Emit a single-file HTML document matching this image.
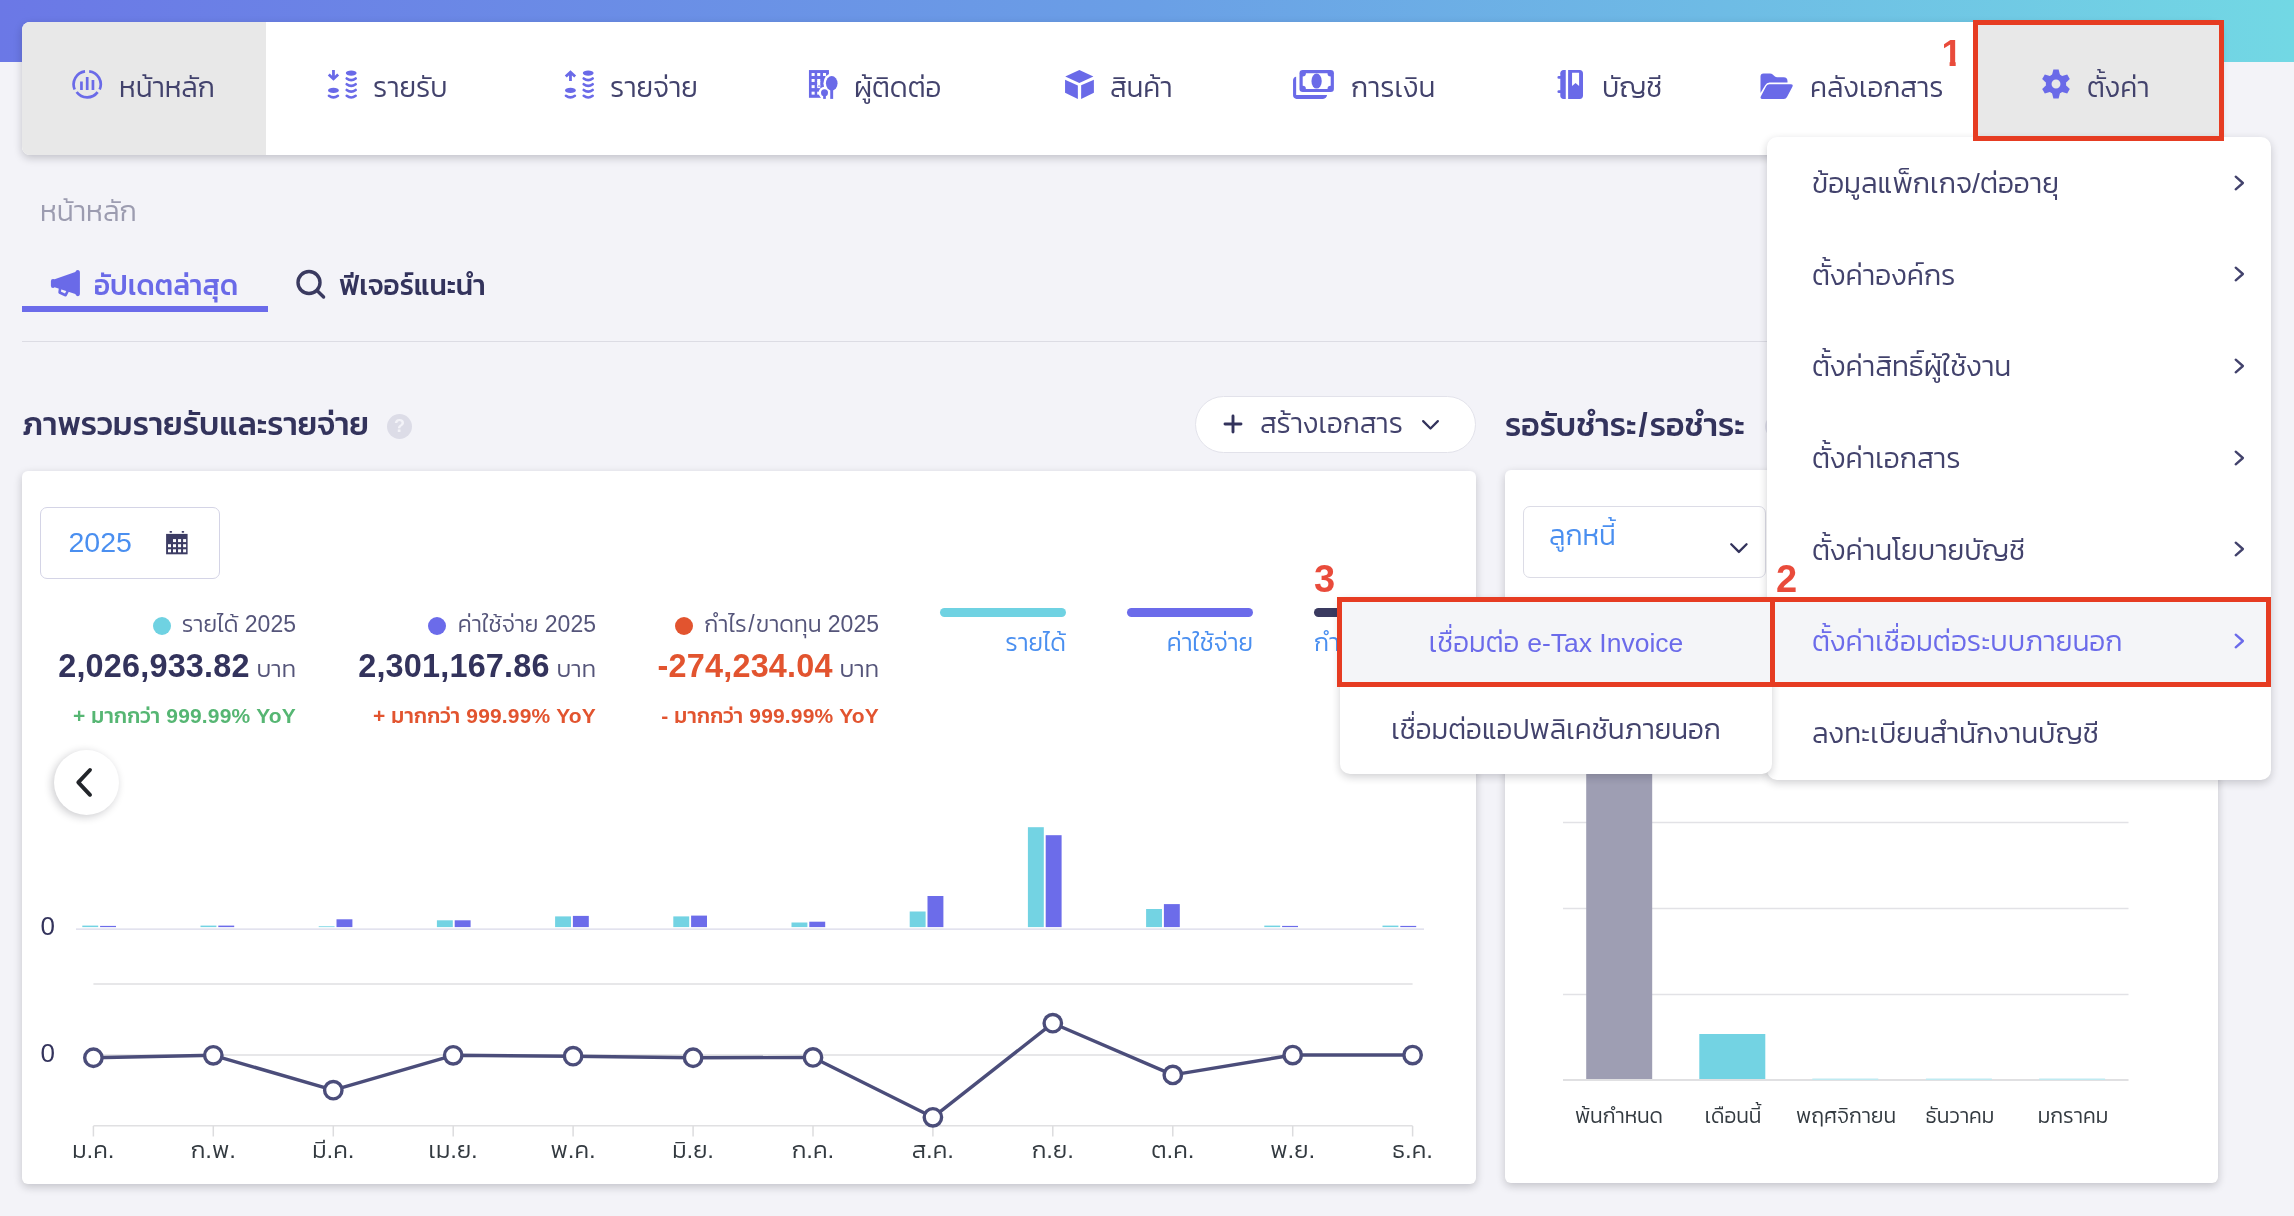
<!DOCTYPE html>
<html lang="th">
<head>
<meta charset="utf-8">
<title>FlowAccount</title>
<style>
*{box-sizing:border-box;margin:0;padding:0}
html,body{width:2294px;height:1216px;overflow:hidden}
body{background:#f3f3f8;font-family:"Liberation Sans","Kanit","Prompt","Noto Sans Thai",sans-serif;font-weight:300;color:#42426c;position:relative;will-change:opacity}
.abs{position:absolute}
.t{position:absolute;white-space:nowrap;line-height:1}
#topgrad{left:0;top:0;width:2294px;height:62px;background:linear-gradient(90deg,#6b78e6 0%,#6a9fe6 50%,#72d8e4 100%)}
#nav{left:22px;top:22px;width:2198px;height:133px;background:#fff;border-radius:8px;box-shadow:0 3px 9px rgba(20,20,30,.22)}
#navact{left:22px;top:22px;width:244px;height:133px;background:#e8e8e8;border-radius:8px 0 0 8px}
.nt{font-size:28.050px;top:73.500px;color:#42426c}
#setbg{left:1975px;top:22px;width:245px;height:133px;background:#e8e8e8;border-radius:0 8px 8px 0}
#setbox{left:1973px;top:20px;width:251px;height:121px;border:5px solid #e63c22}
.red{color:#e94b3b;font-weight:700;font-size:38px}
#menu{left:1767px;top:136.500px;width:504px;height:643px;background:#fff;border-radius:10px;box-shadow:0 3px 8px rgba(20,20,30,.2)}
.mi{font-size:28.300px;left:1812px;color:#42426c}
#sub{left:1340px;top:598px;width:431.800px;height:175.700px;background:#fff;border-radius:0 0 10px 10px;box-shadow:0 3px 8px rgba(20,20,30,.2)}
.card{background:#fff;border-radius:6px;box-shadow:0 3px 9px rgba(20,20,30,.21)}

.st1{top:613px;font-size:23px;color:#55557a}
.st2{top:650.300px;font-size:24px;color:#55557a}
.st2 b{font-size:32.400px;font-weight:700;color:#33335c;letter-spacing:.2px}
.st3{top:704.500px;font-size:21px;font-weight:600;letter-spacing:.150px}
.th{font-weight:500}
.lg{top:630.500px;font-size:24.600px;color:#4a8ff0}
</style>
</head>
<body>
<div id="topgrad" class="abs"></div>
<div id="nav" class="abs"></div>
<div id="navact" class="abs"></div>

<!-- NAV ITEMS -->
<svg class="abs" style="left:71px;top:68px" width="32" height="32" viewBox="71 68 32 32" fill="none" stroke="#6a6ae8">
 <g stroke-width="2.700"><path d="M74.700 89.500A13.050 13.050 0 0 1 85.050 71.380"/><path d="M89.170 71.350A13.050 13.050 0 0 1 99.650 89.500"/><path d="M97.620 92.100A13.050 13.050 0 0 1 76.640 91.920"/></g>
 <g stroke-width="2.700"><path d="M81.450 81.400V89.900M87.200 77V89.900M92.950 80V89.900"/></g>
</svg>
<div class="t nt" style="left:119px">หน้าหลัก</div>

<svg class="abs" style="left:326px;top:66px" width="34" height="36" viewBox="326 66 34 36" fill="none" stroke="#6a6ae8">
 <path d="M333.46 70.1V79M328.76 74.48L333.46 78.93L338.16 74.48" stroke-width="2.800" stroke-linecap="butt"/>
 <path d="M328.94 95.75Q333.42 99.15 337.90 95.75M346.72 78.43Q351.20 81.83 355.68 78.43M346.72 84.21Q351.20 87.61 355.68 84.21M346.72 89.99Q351.20 93.39 355.68 89.99M346.72 95.77Q351.20 99.17 355.68 95.77" stroke-width="2.600" stroke-linecap="round"/>
 <g fill="#6a6ae8" stroke="none"><ellipse cx="333.42" cy="90.4" rx="5.400" ry="2.550"/><ellipse cx="351.20" cy="73.1" rx="5.400" ry="2.550"/></g>
</svg>
<div class="t nt" style="left:373px">รายรับ</div>

<svg class="abs" style="left:563px;top:66px" width="34" height="36" viewBox="563 66 34 36" fill="none" stroke="#6a6ae8">
 <path d="M570.46 81V72M565.76 76.6L570.46 72.150L575.16 76.6" stroke-width="2.800" stroke-linecap="butt"/>
 <path d="M565.94 95.75Q570.42 99.15 574.90 95.75M583.72 78.43Q588.20 81.83 592.68 78.43M583.72 84.21Q588.20 87.61 592.68 84.21M583.72 89.99Q588.20 93.39 592.68 89.99M583.72 95.77Q588.20 99.17 592.68 95.77" stroke-width="2.600" stroke-linecap="round"/>
 <g fill="#6a6ae8" stroke="none"><ellipse cx="570.42" cy="90.4" rx="5.400" ry="2.550"/><ellipse cx="588.20" cy="73.1" rx="5.400" ry="2.550"/></g>
</svg>
<div class="t nt" style="left:610px">รายจ่าย</div>

<svg class="abs" style="left:806px;top:66px" width="36" height="36" viewBox="806 66 36 36">
 <rect x="808.950" y="70.050" width="20" height="27.750" fill="#6a6ae8"/>
 <g fill="#fff"><rect x="811.6" y="73.03" width="3.050" height="2.950"/><rect x="811.6" y="79.0" width="3.050" height="2.950"/><rect x="811.6" y="85.15" width="3.050" height="2.950"/><rect x="811.6" y="91.67" width="3.050" height="2.950"/><rect x="817.2" y="73.03" width="3.050" height="2.950"/><rect x="817.2" y="79.0" width="3.050" height="2.950"/><rect x="817.2" y="85.15" width="3.050" height="2.950"/><rect x="817.2" y="91.67" width="3.050" height="2.950"/><rect x="823.0" y="73.03" width="3.050" height="2.950"/><rect x="817.200" y="81" width="3.050" height="5"/></g>
 <circle cx="819" cy="86.100" r=".800" fill="#6a6ae8"/>
 <g fill="#fff"><ellipse cx="831.740" cy="83.350" rx="8.300" ry="9.900"/><circle cx="824.500" cy="92.750" r="5.900"/><rect x="820.800" y="92" width="14.600" height="7"/></g>
 <g fill="#6a6ae8"><ellipse cx="831.740" cy="83.350" rx="5.800" ry="7.350"/><rect x="830.250" y="88" width="2.900" height="10.900"/>
 <circle cx="824.500" cy="92.750" r="3.500"/><rect x="823.150" y="94" width="2.700" height="4.900"/></g>
</svg>
<div class="t nt" style="left:854px">ผู้ติดต่อ</div>

<svg class="abs" style="left:1062px;top:66px" width="36" height="36" viewBox="1062 66 36 36" fill="#6a6ae8">
 <path d="M1079.350 70 1093.400 76.470 1079.350 82.950 1065.250 76.470z"/>
 <path d="M1065.050 79.800 1077.850 85.450V98.900L1065.050 92.850z"/>
 <path d="M1081.150 85.350 1093.900 79.750V92.750L1081.150 98.900z"/>
</svg>
<div class="t nt" style="left:1110px">สินค้า</div>

<svg class="abs" style="left:1290px;top:66px" width="48" height="36" viewBox="1290 66 48 36">
 <path fill="#6a6ae8" d="M1296.150 76.800V95H1327.100C1326.800 97.300 1325.300 98.900 1323 98.900H1296.600C1294.500 98.900 1293.050 97.400 1293.050 95.300V80.400C1293.050 78.400 1294.300 77 1296.150 76.800z"/>
 <rect fill="#6a6ae8" x="1299.500" y="69.950" width="34.400" height="22.100" rx="3.200"/>
 <path fill="#fff" d="M1305.900 73.200H1327.500A3.200 3.200 0 0 0 1330.700 76.400V85.750A3.200 3.200 0 0 0 1327.500 88.950H1305.900A3.200 3.200 0 0 0 1302.700 85.750V76.400A3.200 3.200 0 0 0 1305.900 73.200z"/>
 <ellipse fill="#6a6ae8" cx="1316.600" cy="81.100" rx="5.150" ry="7.500"/>
</svg>
<div class="t nt" style="left:1351px">การเงิน</div>

<svg class="abs" style="left:1554px;top:66px" width="34" height="36" viewBox="1554 66 34 36">
 <path fill="#6a6ae8" d="M1563.500 70.050H1565.750V98.900H1563.500C1561.600 98.900 1560.300 97.600 1560.300 95.700V73.250C1560.300 71.350 1561.600 70.050 1563.500 70.050z"/>
 <path stroke="#6a6ae8" stroke-width="2.900" stroke-linecap="round" d="M1558.850 77.400H1561M1558.850 91.650H1561"/>
 <path fill="#6a6ae8" d="M1568.100 70.050H1579.800C1581.700 70.050 1583 71.350 1583 73.250V95.700C1583 97.600 1581.700 98.900 1579.800 98.900H1568.100z"/>
 <path fill="#fff" d="M1572.050 72.850H1579.100V85.900L1575.580 83 1572.050 85.900z"/>
</svg>
<div class="t nt" style="left:1602px">บัญชี</div>

<svg class="abs" style="left:1756px;top:66px" width="42" height="36" viewBox="1756 66 42 36" fill="#6a6ae8">
 <path d="M1760.500 76.400Q1760.500 73.400 1763.500 73.400H1770Q1771.600 73.400 1772.700 74.400L1774.600 76.200Q1775.700 77.200 1777.300 77.200H1783.600Q1787.500 77.200 1787.500 81.200V82.600H1769.600Q1766.600 82.600 1765.200 85.200L1760.500 93z"/>
 <path d="M1769.300 84.150H1790.700Q1793.600 84.150 1792.400 86.800L1787 97Q1786 98.900 1783.800 98.900H1762.600Q1759.600 98.900 1760.900 96.300L1766.300 86.100Q1767.300 84.150 1769.300 84.150z"/>
</svg>
<div class="t nt" style="left:1810px">คลังเอกสาร</div>

<div class="t red" style="left:1941.500px;top:35px;font-size:37px;clip-path:polygon(0 0,14.200px 0,14.200px 100%,8.100px 100%,8.100px 60%,0 60%)">1</div>
<div id="setbg" class="abs"></div>
<svg class="abs" style="left:2037.530px;top:66.430px" width="36" height="36" viewBox="-18 -18 36 36" fill="#6a6ae8">
 <path fill-rule="evenodd" d="M-10.200 0A10.200 10.200 0 1 0 10.200 0A10.200 10.200 0 1 0 -10.200 0zM-4.450 0A4.450 4.450 0 1 1 4.450 0A4.450 4.450 0 1 1 -4.450 0z"/>
 <path transform="rotate(0)" d="M-4.100 -8.500 L-2.600 -14.430 H2.600 L4.100 -8.500z"/><path transform="rotate(60)" d="M-4.100 -8.500 L-2.600 -14.430 H2.600 L4.100 -8.500z"/><path transform="rotate(120)" d="M-4.100 -8.500 L-2.600 -14.430 H2.600 L4.100 -8.500z"/><path transform="rotate(180)" d="M-4.100 -8.500 L-2.600 -14.430 H2.600 L4.100 -8.500z"/><path transform="rotate(240)" d="M-4.100 -8.500 L-2.600 -14.430 H2.600 L4.100 -8.500z"/><path transform="rotate(300)" d="M-4.100 -8.500 L-2.600 -14.430 H2.600 L4.100 -8.500z"/>
</svg>
<div class="t nt" style="left:2087px">ตั้งค่า</div>

<!-- BREADCRUMB + TABS -->
<div class="t" style="left:40px;top:197px;font-size:28.300px;color:#9c9cb0">หน้าหลัก</div>
<svg class="abs" style="left:46px;top:264px" width="38" height="38" viewBox="46 264 38 38">
 <path fill="#6a6ae8" d="M54.600 279.300 75.300 272.100Q76 269.900 77.700 269.900Q79.900 269.900 79.900 272.600V293.500Q79.900 296.200 77.700 296.200Q76 296.200 75.300 294.100L54.600 287.200Q54 288 53 288Q50.900 288 50.900 285.800V281.200Q50.900 279 53 279Q54 279 54.600 279.300z"/>
 <path fill="none" stroke="#6a6ae8" stroke-width="2.600" stroke-linejoin="round" stroke-linecap="butt" d="M60.200 287.500 59.600 292.500 65.600 295.200 68 290.500"/>
</svg>
<div class="t" style="left:94px;top:272px;font-size:28px;font-weight:500;color:#6a6ae8">อัปเดตล่าสุด</div>
<div class="abs" style="left:22px;top:306px;width:246px;height:6px;background:#6b6bea"></div>
<svg class="abs" style="left:294px;top:267px" width="34" height="34" viewBox="0 0 34 34" fill="none" stroke="#3a3a60" stroke-width="3.400" stroke-linecap="round">
 <circle cx="15" cy="15.500" r="11"/><path d="M23 23.500 29.600 30"/>
</svg>
<div class="t" style="left:339px;top:272px;font-size:28px;font-weight:500;color:#33335c">ฟีเจอร์แนะนำ</div>
<div class="abs" style="left:22px;top:341px;width:2198px;height:1px;background:#dcdce4"></div>

<!-- SECTION HEADERS -->
<div class="t" style="left:22px;top:408px;font-size:32.200px;font-weight:500;color:#33335c">ภาพรวมรายรับและรายจ่าย</div>
<div class="abs" style="left:386.900px;top:413.800px;width:25px;height:25px;border-radius:50%;background:#dcdce7;color:#f3f3f8;font-size:18px;font-weight:700;text-align:center;line-height:25.500px">?</div>
<div class="abs" style="left:1195px;top:396px;width:281px;height:57px;border-radius:29px;background:#fff;border:1px solid #e2e2ea"></div>
<svg class="abs" style="left:1222.400px;top:413.300px" width="22" height="22" viewBox="0 0 22 22" stroke="#33335c" stroke-width="2.900" stroke-linecap="round"><path d="M11 3v16M3 11h16"/></svg>
<div class="t" style="left:1260px;top:410px;font-size:28px;color:#42426c">สร้างเอกสาร</div>
<svg class="abs" style="left:1420.800px;top:418.500px" width="19" height="12.100" viewBox="0 0 22 14" fill="none" stroke="#33335c" stroke-width="2.600" stroke-linecap="round" stroke-linejoin="round"><path d="M2.500 2.500 11 11l8.500-8.500"/></svg>
<div class="t" style="left:1505px;top:408px;font-size:32.200px;font-weight:500;color:#33335c">รอรับชำระ<span style="display:inline-block;width:13.500px;text-align:center;font-weight:700;font-size:33px">/</span>รอชำระ</div>
<div class="abs" style="left:1764.500px;top:413.800px;width:25px;height:25px;border-radius:50%;background:#dcdce7"></div>

<!-- CARDS -->
<div class="abs card" style="left:22px;top:471px;width:1454px;height:713px"></div>
<div class="abs card" style="left:1505px;top:470px;width:713px;height:713px"></div>

<!-- LEFT CARD CONTENT -->
<div class="abs" style="left:40px;top:507px;width:180px;height:72px;border:1px solid #d4d4e6;border-radius:7px;background:#fff"></div>
<div class="t" style="left:68.500px;top:528px;font-size:28.500px;font-weight:400;color:#4a8ff0">2025</div>
<svg class="abs" style="left:164px;top:528px" width="26" height="28" viewBox="164 528 26 28">
 <rect x="166.100" y="533.900" width="21.500" height="20.400" fill="#3c3c64"/>
 <rect x="169.500" y="530.900" width="2.600" height="1.800" rx=".800" fill="#3c3c64"/><rect x="181.600" y="530.900" width="2.600" height="1.800" rx=".800" fill="#3c3c64"/>
 <g fill="#fff"><rect x="173" y="539.1" width="3" height="3"/><rect x="178.05" y="539.1" width="3" height="3"/><rect x="183.1" y="539.1" width="3" height="3"/><rect x="168" y="544.2" width="3" height="3"/><rect x="173" y="544.2" width="3" height="3"/><rect x="178.05" y="544.2" width="3" height="3"/><rect x="183.1" y="544.2" width="3" height="3"/><rect x="168" y="549.3" width="3" height="3"/><rect x="173" y="549.3" width="3" height="3"/><rect x="178.05" y="549.3" width="3" height="3"/><rect x="183.1" y="549.3" width="3" height="3"/></g>
</svg>

<div class="abs" style="left:153px;top:617px;width:18px;height:18px;border-radius:50%;background:#6fd2e2"></div>
<div class="t st1" style="right:1998px">รายได้ 2025</div>
<div class="t st2" style="right:1998px"><b>2,026,933.82</b> บาท</div>
<div class="t st3" style="right:1998px;color:#56b673">+ <span class="th">มากกว่า</span> 999.99% YoY</div>

<div class="abs" style="left:428px;top:617px;width:18px;height:18px;border-radius:50%;background:#6b6bea"></div>
<div class="t st1" style="right:1698px">ค่าใช้จ่าย 2025</div>
<div class="t st2" style="right:1698px"><b>2,301,167.86</b> บาท</div>
<div class="t st3" style="right:1698px;color:#e2542f">+ <span class="th">มากกว่า</span> 999.99% YoY</div>

<div class="abs" style="left:675px;top:617px;width:18px;height:18px;border-radius:50%;background:#e2542f"></div>
<div class="t st1" style="right:1415px">กำไร<span style="margin:0 1.500px">/</span>ขาดทุน 2025</div>
<div class="t st2" style="right:1415px"><b style="color:#e2542f">-274,234.04</b> บาท</div>
<div class="t st3" style="right:1415px;color:#e2542f">- <span class="th">มากกว่า</span> 999.99% YoY</div>

<div class="abs" style="left:940px;top:608px;width:126px;height:9px;border-radius:5px;background:#6fd2e2"></div>
<div class="t lg" style="right:1228px">รายได้</div>
<div class="abs" style="left:1127px;top:608px;width:126px;height:9px;border-radius:5px;background:#6b6bea"></div>
<div class="t lg" style="right:1041px">ค่าใช้จ่าย</div>
<div class="abs" style="left:1314px;top:608px;width:126px;height:9px;border-radius:5px;background:#3a3a60"></div>
<div class="t lg" style="left:1314px">กำไร/ขาดทุน</div>

<div class="abs" style="left:53.800px;top:749.800px;width:65.400px;height:65.400px;border-radius:50%;background:#fff;box-shadow:-2px 2px 9px rgba(20,20,30,.22)"></div>
<svg class="abs" style="left:70px;top:762px" width="30" height="40" viewBox="70 762 30 40" fill="none" stroke="#22252a" stroke-width="3.900" stroke-linecap="round" stroke-linejoin="round"><path d="M90 770 78.300 782.300 90 794.800"/></svg>

<svg class="abs" style="left:0;top:0" width="1480" height="1216" viewBox="0 0 1480 1216">
 <path d="M76 929.200H1424" stroke="#d8d8e8" stroke-width="1.200"/>
 <rect x="82.3" y="925.6" width="15.900" height="1.5" fill="#73d3e3"/><rect x="100.1" y="925.9" width="15.900" height="1.2" fill="#6c6cea"/><rect x="200.5" y="925.6" width="15.900" height="1.5" fill="#73d3e3"/><rect x="218.3" y="925.6" width="15.900" height="1.5" fill="#6c6cea"/><rect x="318.7" y="926.3" width="15.900" height="0.8" fill="#73d3e3"/><rect x="336.5" y="919.3" width="15.900" height="7.8" fill="#6c6cea"/><rect x="436.9" y="920.3" width="15.900" height="6.8" fill="#73d3e3"/><rect x="454.7" y="920.3" width="15.900" height="6.8" fill="#6c6cea"/><rect x="555.1" y="916.4" width="15.900" height="10.7" fill="#73d3e3"/><rect x="572.9" y="915.9" width="15.900" height="11.2" fill="#6c6cea"/><rect x="673.3" y="916.4" width="15.900" height="10.7" fill="#73d3e3"/><rect x="691.1" y="915.6" width="15.900" height="11.5" fill="#6c6cea"/><rect x="791.5" y="922.5" width="15.900" height="4.6" fill="#73d3e3"/><rect x="809.3" y="921.7" width="15.900" height="5.4" fill="#6c6cea"/><rect x="909.7" y="911.5" width="15.900" height="15.6" fill="#73d3e3"/><rect x="927.5" y="896.0" width="15.900" height="31.1" fill="#6c6cea"/><rect x="1027.9" y="827.2" width="15.900" height="99.9" fill="#73d3e3"/><rect x="1045.7" y="835.2" width="15.900" height="91.9" fill="#6c6cea"/><rect x="1146.1" y="909.0" width="15.900" height="18.1" fill="#73d3e3"/><rect x="1163.9" y="904.1" width="15.900" height="23" fill="#6c6cea"/><rect x="1264.3" y="925.6" width="15.900" height="1.5" fill="#73d3e3"/><rect x="1282.1" y="925.9" width="15.900" height="1.2" fill="#6c6cea"/><rect x="1382.5" y="925.6" width="15.900" height="1.5" fill="#73d3e3"/><rect x="1400.3" y="925.9" width="15.900" height="1.2" fill="#6c6cea"/>
 <g stroke="#e0e0e2" stroke-width="1.600"><path d="M93.400 984H1412.600M93.400 1055H1412.600M93.400 1125.800H1412.600"/></g>
 <g stroke="#dcdcde" stroke-width="1.500"><path d="M93.4 1126v10.500"/><path d="M213.3 1126v10.500"/><path d="M333.3 1126v10.500"/><path d="M453.2 1126v10.500"/><path d="M573.1 1126v10.500"/><path d="M693.1 1126v10.500"/><path d="M813.0 1126v10.500"/><path d="M932.9 1126v10.500"/><path d="M1052.8 1126v10.500"/><path d="M1172.8 1126v10.500"/><path d="M1292.7 1126v10.500"/><path d="M1412.6 1126v10.500"/></g>
 <polyline points="93.4,1057.75 213.3,1055.3 333.3,1090.2 453.2,1055.3 573.1,1056.2 693.1,1057.75 813.0,1057.45 932.9,1117.3 1052.8,1023.2 1172.8,1074.9 1292.7,1055.05 1412.6,1055.05" fill="none" stroke="#4b4d7a" stroke-width="3.400" stroke-linejoin="round"/>
 <g fill="#fff" stroke="#4b4d7a" stroke-width="3.400"><circle cx="93.4" cy="1057.75" r="8.700"/><circle cx="213.3" cy="1055.3" r="8.700"/><circle cx="333.3" cy="1090.2" r="8.700"/><circle cx="453.2" cy="1055.3" r="8.700"/><circle cx="573.1" cy="1056.2" r="8.700"/><circle cx="693.1" cy="1057.75" r="8.700"/><circle cx="813.0" cy="1057.45" r="8.700"/><circle cx="932.9" cy="1117.3" r="8.700"/><circle cx="1052.8" cy="1023.2" r="8.700"/><circle cx="1172.8" cy="1074.9" r="8.700"/><circle cx="1292.7" cy="1055.05" r="8.700"/><circle cx="1412.6" cy="1055.05" r="8.700"/></g>
 <g font-size="24" fill="#333a40" font-weight="300"><text x="93.4" y="1158" text-anchor="middle">ม.ค.</text><text x="213.3" y="1158" text-anchor="middle">ก.พ.</text><text x="333.3" y="1158" text-anchor="middle">มี.ค.</text><text x="453.2" y="1158" text-anchor="middle">เม.ย.</text><text x="573.1" y="1158" text-anchor="middle">พ.ค.</text><text x="693.1" y="1158" text-anchor="middle">มิ.ย.</text><text x="813.0" y="1158" text-anchor="middle">ก.ค.</text><text x="932.9" y="1158" text-anchor="middle">ส.ค.</text><text x="1052.8" y="1158" text-anchor="middle">ก.ย.</text><text x="1172.8" y="1158" text-anchor="middle">ต.ค.</text><text x="1292.7" y="1158" text-anchor="middle">พ.ย.</text><text x="1412.6" y="1158" text-anchor="middle">ธ.ค.</text></g>
 <g font-size="26" fill="#33335c" font-weight="400"><text x="40.500" y="935">0</text><text x="40.500" y="1062">0</text></g>
</svg>

<!-- RIGHT CARD CONTENT -->
<div class="abs" style="left:1523px;top:506px;width:243px;height:72px;border:1px solid #dcdce6;border-radius:7px;background:#fff"></div>
<div class="t" style="left:1549px;top:522px;font-size:28px;font-weight:300;color:#4a8ff0">ลูกหนี้</div>
<svg class="abs" style="left:1729.300px;top:541.700px" width="19.800" height="12.600" viewBox="0 0 22 14" fill="none" stroke="#33335c" stroke-width="2.600" stroke-linecap="round" stroke-linejoin="round"><path d="M2.500 2.500 11 11l8.500-8.500"/></svg>
<svg class="abs" style="left:1500px;top:700px" width="720" height="480" viewBox="1500 700 720 480">
 <g stroke="#e2e2e6" stroke-width="1.500"><path d="M1563 822.500H2128.500M1563 908.500H2128.500M1563 994.500H2128.500"/><path d="M1563 1080H2128.500" stroke-width="2" stroke="#e0e0e2"/></g>
 <rect x="1586.200" y="740" width="66" height="339" fill="#9e9eb3"/>
 <rect x="1699.300" y="1034" width="66" height="45" fill="#73d3e3"/>
 <g fill="#bfeaf1"><rect x="1812.300" y="1078.500" width="66" height="1.500"/><rect x="1925.900" y="1078.500" width="66" height="1.500"/><rect x="2039.100" y="1078.500" width="66" height="1.500"/></g>
 <g font-size="21" fill="#333a40" font-weight="300"><text x="1619" y="1123" text-anchor="middle">พ้นกำหนด</text><text x="1733" y="1123" text-anchor="middle">เดือนนี้</text><text x="1846" y="1123" text-anchor="middle">พฤศจิกายน</text><text x="1960" y="1123" text-anchor="middle">ธันวาคม</text><text x="2073" y="1123" text-anchor="middle">มกราคม</text></g>
</svg>

<!-- DROPDOWN MENU -->
<div id="menu" class="abs"></div>
<div id="sub" class="abs"></div>
<div class="abs" style="left:1337px;top:597px;width:438px;height:90px;background:#f4f5f8;border:5px solid #e63c22"></div>
<div class="abs" style="left:1770px;top:597px;width:501px;height:90px;background:#f4f5f8;border:5px solid #e63c22"></div>
<div class="t mi" style="top:168.8px;color:#42426c">ข้อมูลแพ็กเกจ/ต่ออายุ</div>
<svg class="abs" style="left:2233.300px;top:173.7px" width="12.600" height="18" viewBox="0 0 14 20" fill="none" stroke="#42426c" stroke-width="2.600" stroke-linecap="round" stroke-linejoin="round"><path d="M3 3l8 7-8 7"/></svg>
<div class="t mi" style="top:260.5px;color:#42426c">ตั้งค่าองค์กร</div>
<svg class="abs" style="left:2233.300px;top:265.4px" width="12.600" height="18" viewBox="0 0 14 20" fill="none" stroke="#42426c" stroke-width="2.600" stroke-linecap="round" stroke-linejoin="round"><path d="M3 3l8 7-8 7"/></svg>
<div class="t mi" style="top:352.1px;color:#42426c">ตั้งค่าสิทธิ์ผู้ใช้งาน</div>
<svg class="abs" style="left:2233.300px;top:357.0px" width="12.600" height="18" viewBox="0 0 14 20" fill="none" stroke="#42426c" stroke-width="2.600" stroke-linecap="round" stroke-linejoin="round"><path d="M3 3l8 7-8 7"/></svg>
<div class="t mi" style="top:443.8px;color:#42426c">ตั้งค่าเอกสาร</div>
<svg class="abs" style="left:2233.300px;top:448.7px" width="12.600" height="18" viewBox="0 0 14 20" fill="none" stroke="#42426c" stroke-width="2.600" stroke-linecap="round" stroke-linejoin="round"><path d="M3 3l8 7-8 7"/></svg>
<div class="t mi" style="top:535.5px;color:#42426c">ตั้งค่านโยบายบัญชี</div>
<svg class="abs" style="left:2233.300px;top:540.4px" width="12.600" height="18" viewBox="0 0 14 20" fill="none" stroke="#42426c" stroke-width="2.600" stroke-linecap="round" stroke-linejoin="round"><path d="M3 3l8 7-8 7"/></svg>
<div class="t mi" style="top:627.2px;color:#6b6bea">ตั้งค่าเชื่อมต่อระบบภายนอก</div>
<svg class="abs" style="left:2233.300px;top:632.0px" width="12.600" height="18" viewBox="0 0 14 20" fill="none" stroke="#6b6bea" stroke-width="2.600" stroke-linecap="round" stroke-linejoin="round"><path d="M3 3l8 7-8 7"/></svg>
<div class="t mi" style="top:718.8px;color:#42426c">ลงทะเบียนสำนักงานบัญชี</div>

<div class="t" style="left:1340px;width:432px;text-align:center;top:629px;font-size:28px;color:#6b6bea">เชื่อมต่อ <span style="font-size:26.500px">e-Tax Invoice</span></div>
<div class="t" style="left:1340px;width:432px;text-align:center;top:716px;font-size:28px;color:#42426c">เชื่อมต่อแอปพลิเคชันภายนอก</div>
<div class="t red" style="left:1776px;top:560px">2</div>
<div class="t red" style="left:1314px;top:560px">3</div>
<div id="setbox" class="abs"></div>
</body>
</html>
